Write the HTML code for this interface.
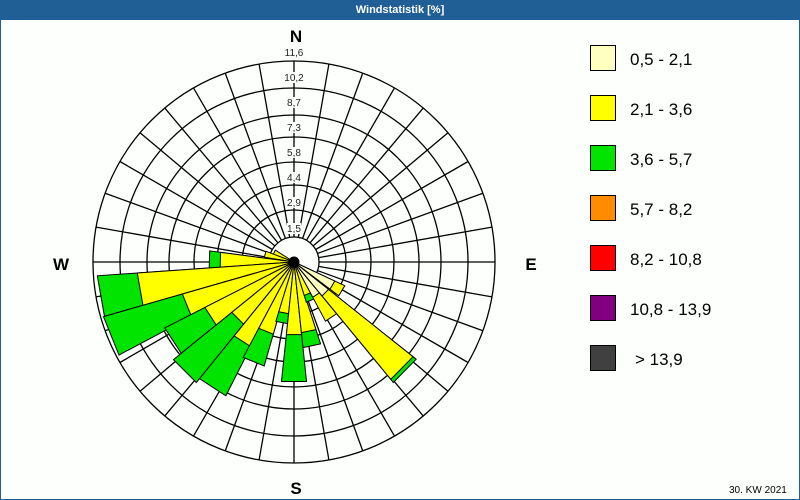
<!DOCTYPE html>
<html><head><meta charset="utf-8"><style>
body{margin:0;width:800px;height:500px;overflow:hidden;background:#fff;font-family:"Liberation Sans",sans-serif}
#t{position:absolute;left:0;top:0;width:800px;height:20px;background:#1f5f96;color:#fff;font-size:11px;font-weight:bold;text-align:center;line-height:20px}
#f{position:absolute;left:0;top:20px;width:798px;height:479px;border:1px solid #1f5f96;border-top:0;background:#fdfffd}
</style></head><body>
<div id="t">Windstatistik [%]</div>
<div id="f"></div>
<svg width="800" height="500" style="position:absolute;left:0;top:0" font-family="Liberation Sans, sans-serif">
<g transform="translate(294,262)" fill="none" stroke="#000" stroke-width="1.3">
<circle r="201"/><circle r="174"/><circle r="147"/><circle r="125"/><circle r="100"/><circle r="77"/><circle r="52"/><circle r="25"/>
<g id="sp">
<line x1="0" y1="-25" x2="0" y2="-201"/>
<line x1="0" y1="-25" x2="0" y2="-201" transform="rotate(10)"/>
<line x1="0" y1="-25" x2="0" y2="-201" transform="rotate(20)"/>
<line x1="0" y1="-25" x2="0" y2="-201" transform="rotate(30)"/>
<line x1="0" y1="-25" x2="0" y2="-201" transform="rotate(40)"/>
<line x1="0" y1="-25" x2="0" y2="-201" transform="rotate(50)"/>
<line x1="0" y1="-25" x2="0" y2="-201" transform="rotate(60)"/>
<line x1="0" y1="-25" x2="0" y2="-201" transform="rotate(70)"/>
<line x1="0" y1="-25" x2="0" y2="-201" transform="rotate(80)"/>
</g>
<use href="#sp" transform="rotate(90)"/><use href="#sp" transform="rotate(180)"/><use href="#sp" transform="rotate(270)"/>
</g>
<g fill="#fdfffd">
<rect x="285" y="72" width="18" height="11"/><rect x="287" y="97" width="14" height="11"/><rect x="287" y="122" width="14" height="11"/>
<rect x="287" y="147" width="14" height="11"/><rect x="287" y="172" width="14" height="11"/><rect x="287" y="197" width="14" height="11"/>
<rect x="287" y="223" width="14" height="11"/>
</g>
<g font-size="10" fill="#222" text-anchor="middle">
<text x="294" y="56">11,6</text><text x="294" y="81">10,2</text><text x="294" y="106">8,7</text><text x="294" y="131">7,3</text>
<text x="294" y="156">5,8</text><text x="294" y="181">4,4</text><text x="294" y="206">2,9</text><text x="294" y="232">1,5</text>
</g>
<g transform="translate(294,262)" stroke="#000" stroke-width="1" stroke-linejoin="miter">
<g transform="rotate(296)"><polygon fill="#ffff00" points="0,0 -2.5,-22 2.5,-22"/></g>
<g transform="rotate(285)"><polygon fill="#ffff00" points="0,0 -3.14,-29.86 3.14,-29.86"/></g>
<g transform="rotate(271.5)"><polygon fill="#00e400" points="0,0 -8.88,-84.61 8.88,-84.61"/><polygon fill="#ffff00" points="0,0 -7.73,-73.66 7.73,-73.66"/></g>
<g transform="rotate(260)"><polygon fill="#00e400" points="0,0 -20.59,-196.09 20.59,-196.09"/><polygon fill="#ffff00" points="0,0 -16.41,-156.28 16.41,-156.28"/></g>
<g transform="rotate(248)"><polygon fill="#00e400" points="0,0 -20.69,-197.09 20.69,-197.09"/><polygon fill="#ffff00" points="0,0 -12.12,-115.47 12.12,-115.47"/></g>
<g transform="rotate(237)"><polygon fill="#00e400" points="0,0 -15.15,-144.33 15.15,-144.33"/><polygon fill="#ffff00" points="0,0 -10.45,-99.54 10.45,-99.54"/></g>
<g transform="rotate(225)"><polygon fill="#00e400" points="0,0 -16.2,-154.29 16.2,-154.29"/><polygon fill="#ffff00" points="0,0 -8.36,-79.63 8.36,-79.63"/></g>
<g transform="rotate(213)"><polygon fill="#00e400" points="0,0 -15.68,-149.31 15.68,-149.31"/><polygon fill="#ffff00" points="0,0 -9.93,-94.56 9.93,-94.56"/></g>
<g transform="rotate(202)"><polygon fill="#00e400" points="0,0 -11.29,-107.5 11.29,-107.5"/><polygon fill="#ffff00" points="0,0 -7.84,-74.66 7.84,-74.66"/></g>
<g transform="rotate(191)"><polygon fill="#00e400" points="0,0 -6.48,-61.71 6.48,-61.71"/><polygon fill="#ffff00" points="0,0 -5.43,-51.76 5.43,-51.76"/></g>
<g transform="rotate(180)"><polygon fill="#00e400" points="0,0 -12.54,-119.45 12.54,-119.45"/><polygon fill="#ffff00" points="0,0 -7.63,-72.66 7.63,-72.66"/></g>
<g transform="rotate(168)"><polygon fill="#00e400" points="0,0 -8.99,-85.6 8.99,-85.6"/><polygon fill="#ffff00" points="0,0 -7.42,-70.67 7.42,-70.67"/></g>
<g transform="rotate(157)"><polygon fill="#00e400" points="0,0 -4.39,-41.81 4.39,-41.81"/><polygon fill="#ffff00" points="0,0 -3.66,-34.84 3.66,-34.84"/></g>
<g transform="rotate(146)"><polygon fill="#ffff00" points="0,0 -7,-66.69 7,-66.69"/><polygon fill="#ffffc0" points="0,0 -4.18,-39.82 4.18,-39.82"/></g>
<g transform="rotate(134.5)"><polygon fill="#00e400" points="0,0 -16.3,-155.28 16.3,-155.28"/><polygon fill="#ffff00" points="0,0 -15.88,-151.3 15.88,-151.3"/><polygon fill="#ffffc0" points="0,0 -4.6,-43.8 4.6,-43.8"/></g>
<g transform="rotate(121)"><polygon fill="#ffff00" points="0,0 -5.85,-55.74 5.85,-55.74"/><polygon fill="#ffffc0" points="0,0 -4.7,-44.79 4.7,-44.79"/></g>
<circle r="5" fill="#000"/>
</g>
<g font-size="17" font-weight="bold" fill="#000" text-anchor="middle">
<text x="296" y="42">N</text><text x="61" y="270">W</text><text x="531" y="270">E</text><text x="296" y="494">S</text>
</g>
<g stroke="#000" stroke-width="1">
<rect x="590.5" y="45.5" width="25" height="25" fill="#ffffc0"/>
<rect x="590.5" y="95.5" width="25" height="25" fill="#ffff00"/>
<rect x="590.5" y="145.5" width="25" height="25" fill="#00e400"/>
<rect x="590.5" y="195.5" width="25" height="25" fill="#ff8c00"/>
<rect x="590.5" y="245.5" width="25" height="25" fill="#ff0000"/>
<rect x="590.5" y="295.5" width="25" height="25" fill="#800080"/>
<rect x="590.5" y="345.5" width="25" height="25" fill="#404040"/>
</g>
<g font-size="17" fill="#000">
<text x="630" y="65">0,5 - 2,1</text><text x="630" y="115">2,1 - 3,6</text><text x="630" y="165">3,6 - 5,7</text>
<text x="630" y="215">5,7 - 8,2</text><text x="630" y="265">8,2 - 10,8</text><text x="630" y="315">10,8 - 13,9</text>
<text x="635" y="365">&gt; 13,9</text>
</g>
<text x="729" y="493" font-size="10" fill="#000">30. KW 2021</text>
</svg>
</body></html>
